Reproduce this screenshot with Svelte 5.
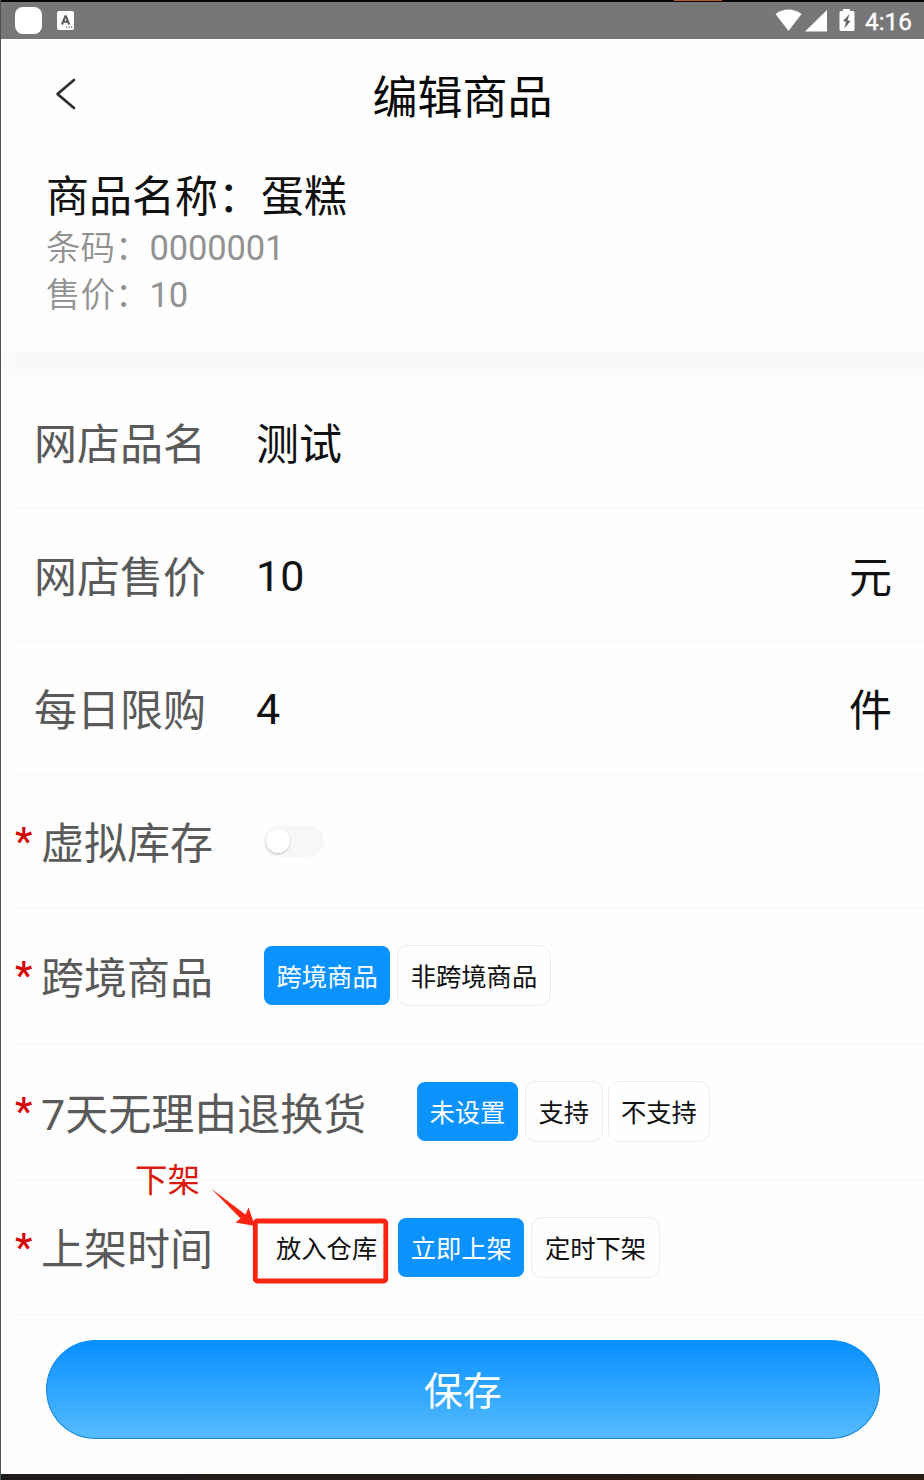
<script>
  const fields = [
    { label: '网店品名', value: '测试', unit: '', height: 134 },
    { label: '网店售价', value: '10', unit: '元', height: 133 },
    { label: '每日限购', value: '4', unit: '件', height: 133 }
  ];
</script>

<div class="screen">
  <div class="top-edge"><span class="accent"></span></div>
  <div class="status">
    <span class="app-dot"></span>
    <svg class="ime" width="17" height="19" viewBox="0 0 17 19">
      <rect width="17" height="19" rx="2" fill="#fff" />
      <path d="M5 13.5 8.3 5.2h.6l3.3 8.3M6.3 10.7h4.7" fill="none" stroke="#5c5c5c" stroke-width="2.1" />
      <path d="M9 16.2h1.3M11.5 16.2h1.3M14 16.2h1.3" stroke="#777" stroke-width="1.3" />
    </svg>
    <span class="grow"></span>
    <svg width="137" height="37" viewBox="0 0 137 37">
      <path d="M0.500 12C8 6 19 6 26.500 12L13.500 29Z" fill="#fff" />
      <path d="M52 8V29.500H30Z" fill="#fff" />
      <path d="M65 9h3V7h7v2h3a1.500 1.500 0 0 1 1.500 1.500v17a1.500 1.500 0 0 1-1.500 1.500H66a1.500 1.500 0 0 1-1.500-1.500V10.500a1.500 1.500 0 0 1 1.500-1.500Z" fill="#fff" />
      <path d="M74.500 12 68 19l3 .8-1.500 6.700 6-7.500-3-.8Z" fill="#666" />
      <text x="90" y="27.500" class="clock">4:16</text>
    </svg>
  </div>

  <header>
    <svg class="back" width="22" height="32" viewBox="0 0 22 32">
      <path d="M19 2 2.500 16 19 30" fill="none" stroke="#2b2b2b" stroke-width="2.700" stroke-linecap="round" stroke-linejoin="round" />
    </svg>
    <h1>编辑商品</h1>
  </header>

  <section class="summary">
    <div class="name">商品名称：蛋糕</div>
    <div class="meta">条码：<span class="num">0000001</span></div>
    <div class="meta">售价：<span class="num">10</span></div>
  </section>
  <div class="band"></div>

  {#each fields as f}
    <div class="row plain" style:height="{f.height}px">
      <span class="label">{f.label}</span>
      <span class="value" class:digits={/^\d+$/.test(f.value)}>{f.value}</span>
      <span class="unit">{f.unit}</span>
    </div>
  {/each}

  <div class="row">
    <span class="star">*</span><span class="label">虚拟库存</span>
    <span class="switch"><span class="knob"></span></span>
  </div>
  <div class="row tall">
    <span class="star">*</span><span class="label">跨境商品</span>
    <div class="options">
      <span class="opt on">跨境商品</span>
      <span class="opt second">非跨境商品</span>
    </div>
  </div>
  <div class="row tall">
    <span class="star">*</span><span class="label wide">7天无理由退换货</span>
    <div class="options">
      <span class="opt on">未设置</span>
      <span class="opt second">支持</span>
      <span class="opt">不支持</span>
    </div>
  </div>
  <div class="row last">
    <span class="star">*</span><span class="label">上架时间</span>
    <div class="options">
      <span class="opt store">放入仓库</span>
      <span class="opt on now">立即上架</span>
      <span class="opt">定时下架</span>
    </div>
    <span class="note">下架</span>
    <svg class="mark" width="190" height="110" viewBox="0 0 190 110">
      <rect x="55.300" y="41" width="130.500" height="60" rx="2" fill="none" stroke="#fa2413" stroke-width="4.800" />
      <path d="M11 8.500 45.500 34.500 48.500 27.500 55 46 35.500 42.500 40.500 38.500Z" fill="#fa2413" />
    </svg>
  </div>

  <footer><button>保存</button></footer>
  <div class="bottom-edge"></div>
</div>

<style>
  :global(body) { margin: 0; background: #fff; }
  .screen {
    box-sizing: border-box;
    width: 924px;
    height: 1480px;
    overflow: hidden;
    display: flex;
    flex-direction: column;
    border-left: 1px solid #465558;
    background: #fefefe;
    color: #111;
    font-family: Roboto, "Noto Sans CJK SC", sans-serif;
    font-weight: 400;
  }
  .screen > * { flex-shrink: 0; }
  .top-edge { height: 2px; background: #050505; display: flex; }
  .accent { width: 48px; height: 1px; margin-left: 673px; background: #b85a2b; }
  .status { height: 37px; background: #777; display: flex; align-items: center; box-sizing: border-box; padding: 0 12px 0 14px; }
  .app-dot { width: 27px; height: 27px; border-radius: 8px; background: #fff; }
  .ime { margin-left: 15px; }
  .grow { flex: 1; }
  .clock { font: 400 24.300px Roboto, sans-serif; fill: #fff; stroke: #fff; stroke-width: .4; }
  .num { font-weight: 400; letter-spacing: -.15px; }
  header { height: 115px; display: grid; grid-template-columns: 100px 1fr 100px; align-items: center; }
  .back { margin-left: 54px; margin-top: -5px; }
  h1 { margin: 0; font-weight: 400; font-size: 45px; line-height: 60px; padding-top: 5px; text-align: center; color: #080808; }
  .summary { height: 197px; box-sizing: border-box; padding: 13px 0 0 45px; }
  .name { font-size: 43px; line-height: 60px; height: 58px; }
  .meta { font-size: 34.500px; line-height: 47px; color: #929292; font-weight: 350; }
  .band { height: 24px; background: linear-gradient(to right, #fefefe, #f9f9f9 18px); }
  .row { position: relative; height: 133px; box-sizing: border-box; display: flex; align-items: center; padding-left: 14px; }
  .row::after { content: ""; position: absolute; left: 15px; right: 0; bottom: 0; height: 1px; background: #f6f6f6; }
  .plain { padding: 0 32px 0 33px; }
  .tall { height: 136px; }
  .last { height: 135px; }
  .label { font-size: 43px; line-height: 60px; width: 222px; padding-top: 5px; color: #5a5a5a; white-space: nowrap; flex-shrink: 0; }
  .label.wide { width: 376px; }
  .value { flex: 1; font-size: 43px; line-height: 60px; padding-top: 5px; }
  .value.digits { padding-top: 1px; }
  .unit { font-size: 43px; line-height: 60px; padding-top: 5px; }
  .star { width: 26px; font-size: 39px; line-height: 60px; color: #d60505; flex-shrink: 0; font-weight: 500; }
  .switch { width: 61px; height: 32px; border-radius: 16px; background: #f7f7f7; box-sizing: border-box; padding: 4px 3px; margin-top: -1px; }
  .knob { display: block; width: 24px; height: 24px; border-radius: 50%; background: #fff; box-shadow: 0 1px 2px #8888; }
  .options { display: flex; align-items: center; gap: 5px; margin-top: -1px; }
  .opt { box-sizing: border-box; height: 61px; padding: 2px 12.500px 0; border: 1px solid #ececec; border-radius: 11px; font-size: 25.300px; line-height: 59px; white-space: nowrap; }
  .opt.on { height: 59px; line-height: 59px; padding: 2px 12.500px 0; border: 0; border-radius: 8px; background: #0a92ff; color: #fff; }
  .row .options { margin-left: 1px; }
  .row .wide + .options { margin-left: 0; }
  .second { margin-left: 2px; }
  .opt.store { border-color: transparent; padding: 2px 12px 0; margin-left: -1px; }
  .opt.now { margin: 0 2px 0 3px; }
  .note { position: absolute; left: 134px; top: -22px; font-size: 32.500px; line-height: 46px; color: #d91a0c; }
  .mark { position: absolute; left: 199px; top: 0; }
  footer { height: 159px; box-sizing: border-box; padding: 25px 44px 0 44.500px; }
  button { display: block; width: 100%; height: 99px; border: 1px solid #1686dc; border-top-color: #0a90ff; border-radius: 50px; background: linear-gradient(#088fff, #55bcff); color: #fff; font: 400 39px/92px Roboto, "Noto Sans CJK SC", sans-serif; padding: 5px 0 0; }
  .bottom-edge { height: 6px; background: linear-gradient(to right, #1f1a1c, #2b1d12); }
</style>
